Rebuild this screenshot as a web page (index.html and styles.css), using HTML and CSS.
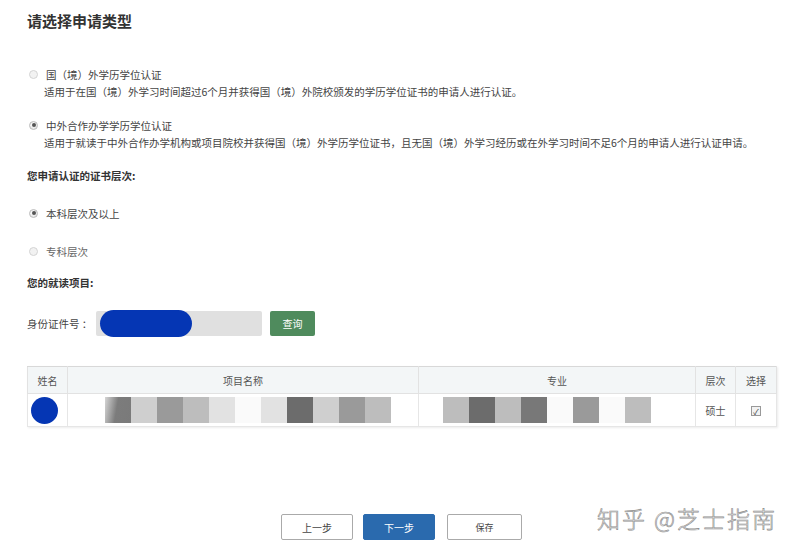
FILE: index.html
```html
<!DOCTYPE html>
<html lang="zh-CN">

<head>
  <meta charset="UTF-8" />
  <meta name="viewport" content="width=device-width, initial-scale=1.0">
  <title>请选择申请类型</title>
  <link rel="stylesheet" href="styles.css">
</head>

<body>
  <div class="page">
    <h2>请选择申请类型</h2>

    <div class="option first">
      <div class="radio-line"><span class="radio"></span>国（境）外学历学位认证</div>
      <p class="desc">适用于在国（境）外学习时间超过6个月并获得国（境）外院校颁发的学历学位证书的申请人进行认证。</p>
    </div>

    <div class="option">
      <div class="radio-line"><span class="radio checked"></span>中外合作办学学历学位认证</div>
      <p class="desc">适用于就读于中外合作办学机构或项目院校并获得国（境）外学历学位证书，且无国（境）外学习经历或在外学习时间不足6个月的申请人进行认证申请。</p>
    </div>

    <div class="section-label">您申请认证的证书层次:</div>

    <div class="radio-line level-a"><span class="radio checked"></span>本科层次及以上</div>
    <div class="radio-line level-b"><span class="radio"></span>专科层次</div>

    <div class="section-label project">您的就读项目:</div>

    <div class="id-row">
      <span class="id-label">身份证件号 ：</span>
      <div class="id-input"><span class="mask-pill"></span></div>
      <button type="button" class="btn-query">查询</button>
    </div>

    <table class="result">
      <thead>
        <tr>
          <th class="col-name">姓名</th>
          <th class="col-project">项目名称</th>
          <th class="col-major">专业</th>
          <th class="col-level">层次</th>
          <th class="col-pick">选择</th>
        </tr>
      </thead>
      <tbody>
        <tr>
          <td><span class="mask-dot"></span></td>
          <td>
            <div class="blur-row project-blur">
              <i class="px dark-fade"></i><i class="px g2"></i><i class="px g4"></i><i class="px g3"></i><i class="px g1"></i><i class="px g0"></i><i class="px g1"></i><i class="px g6"></i><i class="px g2"></i><i class="px g4"></i><i class="px g3"></i>
            </div>
          </td>
          <td>
            <div class="blur-row major-blur">
              <i class="px g3"></i><i class="px g6"></i><i class="px g3"></i><i class="px g5"></i><i class="px g0"></i><i class="px g4"></i><i class="px g0"></i><i class="px g3"></i>
            </div>
          </td>
          <td class="center">硕士</td>
          <td class="center"><span class="check">✓</span></td>
        </tr>
      </tbody>
    </table>

    <div class="buttons">
      <button type="button" class="btn-prev">上一步</button>
      <button type="button" class="btn-next">下一步</button>
      <button type="button" class="btn-save">保存</button>
    </div>

    <div class="watermark">知乎 @芝士指南</div>
  </div>
</body>

</html>
```

FILE: styles.css
```css
* {
  box-sizing: border-box;
}

body {
  margin: 0;
  background: #fff;
  font-family: "Noto Sans CJK SC", "Noto Sans", sans-serif;
  color: #333;
}

.page {
  position: relative;
  height: 551px;
  padding: 10px 24px 0 27px;
}

h2 {
  margin: 0;
  font-size: 15px;
  line-height: 22px;
  font-weight: bold;
  color: #333;
}

.radio-line {
  display: flex;
  align-items: center;
  height: 18px;
  font-size: 10.5px;
  color: #444;
}

.radio {
  width: 9px;
  height: 9px;
  margin: 0 8px 0 2px;
  border-radius: 50%;
  border: 1px solid #bbb;
  background: radial-gradient(circle at 40% 35%, #fff, #dcdcdc);
  position: relative;
}

.radio.checked::after {
  content: "";
  position: absolute;
  left: 1.5px;
  top: 1.5px;
  width: 4px;
  height: 4px;
  border-radius: 50%;
  background: #555;
}

.option {
  margin-top: 15px;
}

.option.first {
  margin-top: 33px;
}

.desc {
  margin: 0;
  padding-left: 17px;
  font-size: 10.5px;
  line-height: 18px;
  color: #444;
}

.section-label {
  margin-top: 15px;
  font-size: 10.5px;
  line-height: 18px;
  font-weight: bold;
  color: #333;
}

.level-a {
  margin-top: 19px;
}

.level-b {
  margin-top: 20px;
  color: #666;
}

.level-b .radio,
.first .radio {
  border-color: #d4d4d4;
  background: #f2f2f2;
}

.section-label.project {
  margin-top: 14px;
}

.id-row {
  display: flex;
  align-items: center;
  margin-top: 18px;
  height: 26px;
}

.id-label {
  width: 69px;
  font-size: 10.5px;
  color: #444;
}

.id-input {
  display: flex;
  align-items: center;
  width: 166px;
  height: 25px;
  padding-left: 4px;
  background: #e0e0e0;
  border-radius: 2px;
}

.mask-pill {
  width: 92px;
  height: 27px;
  border-radius: 14px;
  background: #0536b4;
}

.btn-query {
  margin-left: 8px;
  width: 45px;
  height: 25px;
  border: none;
  border-radius: 2px;
  background: #4f8b5d;
  color: #fff;
  font-family: inherit;
  font-size: 10px;
}

.result {
  margin-top: 30px;
  width: 749px;
  border-collapse: collapse;
  table-layout: fixed;
  box-shadow: 1px 1px 2px rgba(0, 0, 0, 0.08);
}

.result th {
  height: 27px;
  background: #f3f6f7;
  border: 1px solid #e2e2e2;
  border-top-color: #d8d8d8;
  font-weight: normal;
  font-size: 10px;
  color: #555;
}

.result td {
  height: 33px;
  padding: 0;
  border-right: 1px solid #e6e6e6;
  border-bottom: 1px solid #e6e6e6;
  font-size: 10px;
  color: #555;
  vertical-align: middle;
}

.result td:first-child {
  border-left: 1px solid #e6e6e6;
}

.col-name {
  width: 40px;
}

.col-project {
  width: 351px;
}

.col-major {
  width: 277px;
}

.col-level {
  width: 40px;
}

.col-pick {
  width: 41px;
}

.center {
  text-align: center;
}

.mask-dot {
  display: block;
  width: 27px;
  height: 27px;
  margin-left: 3px;
  border-radius: 50%;
  background: #0536b4;
}

.blur-row {
  display: flex;
  height: 26px;
}

.project-blur {
  margin-left: 37px;
}

.major-blur {
  margin-left: 24px;
}

.px {
  display: block;
  width: 26px;
  height: 26px;
}

.g0 { background: #fafafa; }
.g1 { background: #e2e2e2; }
.g2 { background: #cfcfcf; }
.g3 { background: #bdbdbd; }
.g4 { background: #9a9a9a; }
.g5 { background: #787878; }
.g6 { background: #6c6c6c; }

.dark-fade {
  background: linear-gradient(100deg, #d6d6d6 0%, #7c7c7c 45%, #7a7a7a 100%);
}

.check {
  display: inline-block;
  width: 10px;
  height: 10px;
  border: 1px solid #999;
  background: #f2f2f2;
  font-size: 8px;
  line-height: 9px;
  color: #333;
}

.buttons {
  display: flex;
  justify-content: center;
  gap: 10px;
  margin-top: 87px;
}

.buttons button {
  width: 72px;
  height: 26px;
  border: 1px solid #aaa;
  border-radius: 2px;
  background: #fff;
  font-family: inherit;
  font-size: 10px;
  color: #444;
}

.buttons .btn-next {
  background: #2a6aae;
  border-color: #2a6aae;
  color: #fff;
}

.buttons .btn-save {
  width: 75px;
  margin-left: 2px;
  font-size: 9px;
}

.watermark {
  position: absolute;
  left: 597px;
  top: 501px;
  font-size: 23px;
  font-weight: 300;
  letter-spacing: 2px;
  color: #f2f2f2;
  -webkit-text-stroke: 0.6px #8c8c8c;
}
```
